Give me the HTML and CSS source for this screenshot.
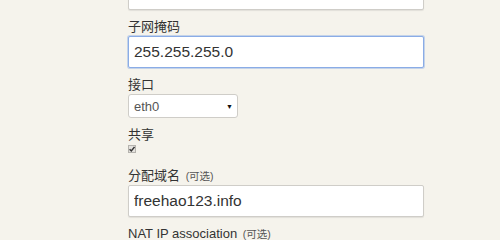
FILE: index.html
```html
<!DOCTYPE html>
<html>

<head>
  <meta charset="utf-8" />
  <title>网络设置</title>
  <link rel="stylesheet" href="styles.css">
</head>

<body>
  <div class="formulario">
    <div class="grupo">
      <input class="campo" type="text" value="" />
    </div>
    <div class="grupo">
      <label class="etiqueta">子网掩码</label>
      <input class="campo activo" type="text" value="255.255.255.0" />
    </div>
    <div class="grupo">
      <label class="etiqueta">接口</label>
      <div class="selector">
        <span>eth0</span>
        <span class="flecha">&#9660;</span>
      </div>
    </div>
    <div class="grupo grupo-check">
      <label class="etiqueta">共享</label>
      <span class="check">
        <svg width="6" height="6" viewBox="0 0 6 6"><path d="M0.6 3.2 L2.3 4.9 L5.5 0.9" fill="none" stroke="#333" stroke-width="1.4" /></svg>
      </span>
    </div>
    <div class="grupo">
      <label class="etiqueta">分配域名 <small class="opcional">(可选)</small></label>
      <input class="campo" type="text" value="freehao123.info" />
    </div>
    <div class="grupo">
      <label class="etiqueta">NAT IP association <small class="opcional">(可选)</small></label>
    </div>
  </div>
</body>

</html>
```

FILE: styles.css
```css
body {
  margin: 0;
  background: #f5f3ec;
  font-family: "Liberation Sans", "Noto Sans CJK SC", sans-serif;
  color: #333;
  overflow: hidden;
}

.formulario {
  margin-left: 128px;
  margin-top: -22px;
  width: 296px;
}

.grupo {
  margin-bottom: 9px;
}

.etiqueta {
  display: block;
  font-size: 13px;
  line-height: 16px;
  margin-bottom: 1px;
}

.opcional {
  margin-left: 2px;
  font-size: 10.5px;
  color: #555;
}

.campo {
  display: block;
  box-sizing: border-box;
  width: 296px;
  height: 32px;
  margin: 0;
  padding: 0 5px;
  border: 1px solid #cfcdc8;
  border-radius: 2px;
  background: #fff;
  box-shadow: 0 1px 1px rgba(0, 0, 0, .08);
  font-family: "Liberation Sans", sans-serif;
  font-size: 15.5px;
  color: #333;
  outline: none;
}

.activo {
  border-color: #8aace6;
  box-shadow: 0 0 0 1px rgba(138, 172, 230, .45);
}

.selector {
  box-sizing: border-box;
  width: 110px;
  height: 24px;
  border: 1px solid #cfcdc8;
  border-radius: 3px;
  background: #fff;
  display: flex;
  align-items: center;
  justify-content: space-between;
  padding: 0 4px 0 5px;
  font-size: 13px;
  color: #555;
}

.flecha {
  font-size: 7px;
  color: #111;
}

.grupo-check {
  margin-bottom: 15px;
}

.check {
  display: flex;
  align-items: center;
  justify-content: center;
  box-sizing: border-box;
  width: 8px;
  height: 8px;
  margin-top: 2px;
  border: 1px solid #b5b3ae;
  background: #e4e2de;
}
```
